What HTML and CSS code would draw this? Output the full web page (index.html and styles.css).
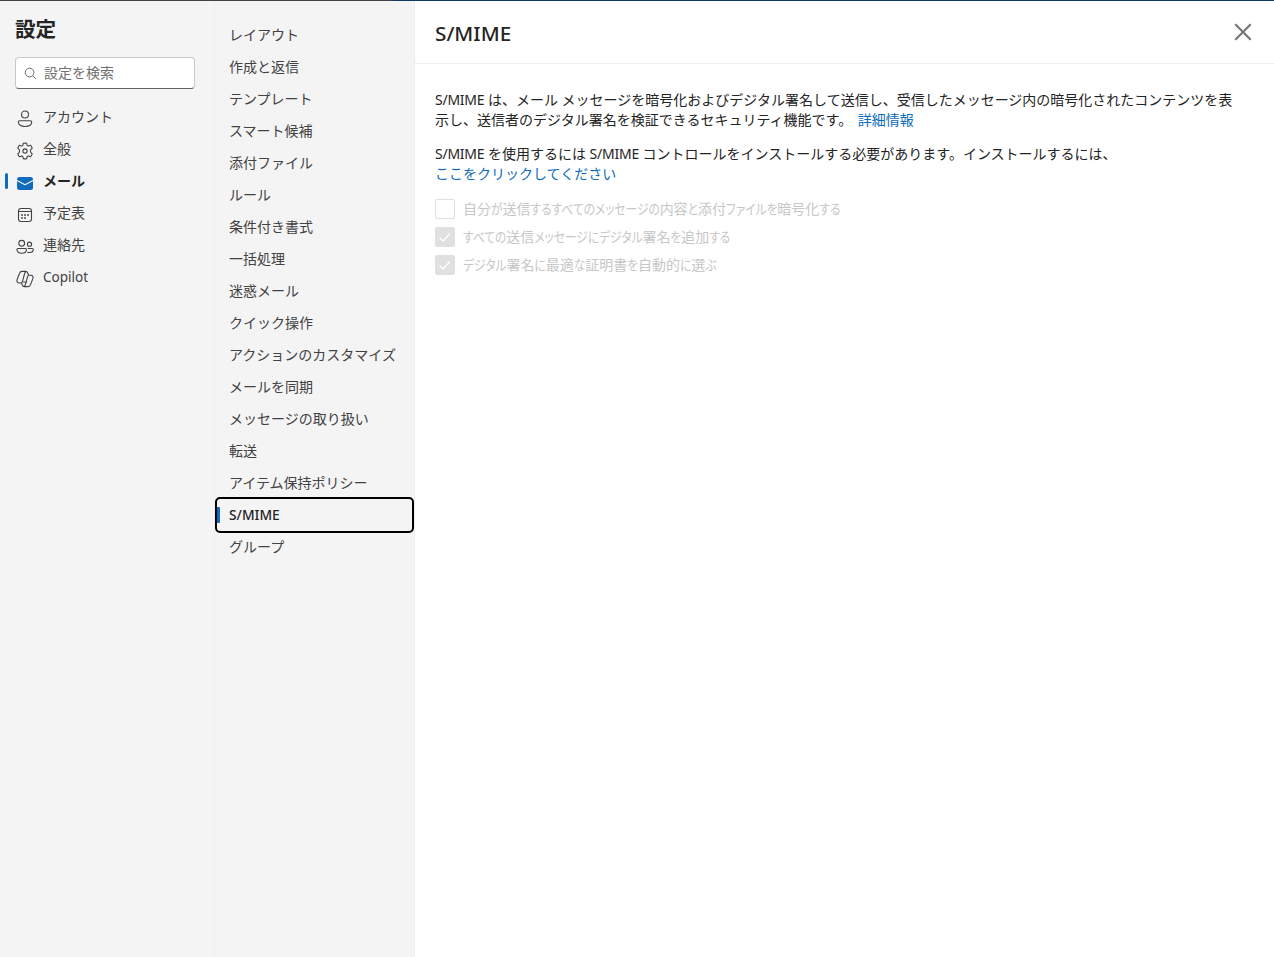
FILE: index.html
```html
<!DOCTYPE html>
<html lang="ja">
<head>
<meta charset="utf-8">
<title>設定</title>
<link rel="stylesheet" href="styles.css">
</head>
<body>
<div class="topbar"><div class="topbar-dim"></div></div>
<div class="settings">
  <aside class="categories">
    <h1 class="title">設定</h1>
    <div class="search">
      <svg class="search-icon" width="14" height="14" viewBox="0 0 14 14" fill="none" stroke="#616161"><circle cx="6" cy="6" r="4.7"/><path d="M9.4 9.4l3.4 3.4"/></svg>
      <span>設定を検索</span>
    </div>
    <nav class="category-list">
      <a class="category"><svg class="icon" viewBox="0 0 20 20"><circle cx="10" cy="5.500" r="3.500"/><path d="M4.800 11.700h10.400c.8 0 1.500.6 1.500 1.400 0 2.700-2.900 4.400-6.700 4.400s-6.700-1.700-6.700-4.400c0-.8.7-1.400 1.500-1.400z"/></svg><span>アカウント</span></a>
      <a class="category"><svg class="icon" viewBox="0 0 20 20"><path d="M8.300 2.300Q10 1.900 11.700 2.300L12.100 4.200Q12.500 5.100 13.500 4.900L15.400 4.200Q16.700 5.500 17.200 7.200L15.800 8.600Q15 10 15.800 11.400L17.200 12.800Q16.700 14.500 15.400 15.800L13.500 15.100Q12.500 14.900 12.100 15.800L11.700 17.700Q10 18.100 8.300 17.700L7.900 15.800Q7.500 14.900 6.500 15.100L4.600 15.800Q3.300 14.500 2.800 12.800L4.200 11.400Q5 10 4.200 8.600L2.800 7.200Q3.300 5.500 4.600 4.200L6.500 4.900Q7.500 5.100 7.900 4.200Z"/><circle cx="10" cy="10" r="2.100"/></svg><span>全般</span></a>
      <a class="category category-active"><svg class="icon" viewBox="0 0 20 20"><rect class="mail" x="2" y="4" width="16" height="13" rx="2.500"/><path class="flap" d="M2 7.500l8 4.200 8-4.200"/></svg><span>メール</span></a>
      <a class="category"><svg class="icon" viewBox="0 0 20 20"><rect x="3.500" y="3.500" width="13" height="13" rx="2.500"/><path d="M3.500 6.500h13"/><g class="dots"><circle cx="7" cy="10" r=".95"/><circle cx="10" cy="10" r=".95"/><circle cx="13" cy="10" r=".95"/><circle cx="7" cy="13" r=".95"/><circle cx="10" cy="13" r=".95"/></g></svg><span>予定表</span></a>
      <a class="category"><svg class="icon" viewBox="0 0 20 20"><circle cx="6.700" cy="6.300" r="2.900"/><circle cx="14.500" cy="7.200" r="2.100"/><path d="M3 11.500h7.500c.6 0 1 .4 1 1 0 2.400-2 3.700-4.800 3.700s-4.800-1.300-4.800-3.700c0-.6.500-1 1.100-1zM13.200 11.500h4c.6 0 1.100.4 1.100 1 0 2-1.600 3-3.800 3-.7 0-1.300-.1-1.800-.3"/></svg><span>連絡先</span></a>
      <a class="category"><svg class="icon" viewBox="0 0 20 20"><path d="M13.500 6.200l-.7-2c-.4-1.100-1-1.800-2.100-1.800H6.900c-1.300 0-2 .8-2.400 2L2.200 10.200c-.8 2.300.2 3.800 2 3.800h1.300c1 0 1.700-.6 2-1.700L9.600 4.500c.3-1.100.8-1.900 1.900-1.900"/><path d="M6.500 13.900l.7 1.900c.4 1.200 1 1.800 2.100 1.800h3.800c1.300 0 2-.8 2.400-2l2.300-5.700c.8-2.300-.2-3.700-2-3.700h-1.300c-1 0-1.700.6-2 1.700l-2.100 7.700c-.3 1.200-.8 1.900-1.900 1.900M8.500 13h3"/></svg><span class="latin-item">Copilot</span></a>
    </nav>
  </aside>
  <nav class="sections">
    <a class="section">レイアウト</a>
    <a class="section">作成と返信</a>
    <a class="section">テンプレート</a>
    <a class="section">スマート候補</a>
    <a class="section">添付ファイル</a>
    <a class="section">ルール</a>
    <a class="section">条件付き書式</a>
    <a class="section">一括処理</a>
    <a class="section">迷惑メール</a>
    <a class="section">クイック操作</a>
    <a class="section">アクションのカスタマイズ</a>
    <a class="section">メールを同期</a>
    <a class="section">メッセージの取り扱い</a>
    <a class="section">転送</a>
    <a class="section">アイテム保持ポリシー</a>
    <a class="section section-active"><span>S/MIME</span></a>
    <a class="section">グループ</a>
  </nav>
  <main class="panel">
    <header class="panel-header">
      <h2 class="panel-title">S/MIME</h2>
      <svg class="close" width="18" height="18" viewBox="0 0 18 18" fill="none" stroke="#767676" stroke-width="2.200"><path d="M1.300 1.300l15.400 15.400M16.700 1.300L1.300 16.700"/></svg>
    </header>
    <div class="content">
      <p class="para"><span class="latin">S/MIME</span> は、メール メッセージを暗号化およびデジタル署名して送信し、受信したメッセージ内の暗号化されたコンテンツを表<br>示し、送信者のデジタル署名を検証できるセキュリティ機能です。 <a class="link more">詳細情報</a></p>
      <p class="para"><span class="latin">S/MIME</span> を使用するには <span class="latin">S/MIME</span> コントロールをインストールする必要があります。インストールするには、<br><a class="link">ここをクリックしてください</a></p>
      <div class="options">
        <div class="option"><span class="box"></span><span class="label">自分<span class="kana">が</span>送信<span class="kana">するすべてのメッセージの</span>内容<span class="kana">と</span>添付<span class="kana">ファイルを</span>暗号化<span class="kana">する</span></span></div>
        <div class="option"><span class="box box-on"><svg width="14" height="14" viewBox="0 0 14 14"><path d="M1.500 7.500l3.500 3.500 7-7.500"/></svg></span><span class="label"><span class="kana">すべての</span>送信<span class="kana">メッセージにデジタル</span>署名<span class="kana">を</span>追加<span class="kana">する</span></span></div>
        <div class="option"><span class="box box-on"><svg width="14" height="14" viewBox="0 0 14 14"><path d="M1.500 7.500l3.500 3.500 7-7.500"/></svg></span><span class="label"><span class="kana">デジタル</span>署名<span class="kana">に</span>最適<span class="kana">な</span>証明書<span class="kana">を</span>自動的<span class="kana">に</span>選<span class="kana">ぶ</span></span></div>
      </div>
    </div>
  </main>
</div>
</body>
</html>
```
FILE: styles.css
```css
* { box-sizing: border-box; }
body {
  margin: 0;
  height: 957px;
  overflow: hidden;
  display: flex;
  flex-direction: column;
  background: #fff;
  color: #242424;
  font: 14px/20px "Noto Sans", "Noto Sans CJK JP", sans-serif;
}
h1, h2, p { margin: 0; }
.topbar { height: 1px; flex: none; background: #0f3868; }
.topbar-dim { width: 393px; height: 1px; background: #454045; }
.settings { flex: 1; display: flex; min-height: 0; }
.categories { width: 214px; flex: none; background: #f4f4f4; padding: 13px 0 0; }
.title { font-size: 20.600px; line-height: 28px; font-weight: 700; padding-left: 15px; font-family: "Noto Sans CJK JP", sans-serif; }
.search {
  display: flex; align-items: center; gap: 7px;
  width: 180px; height: 32px; margin: 15px 0 13px 15px; padding-left: 8px;
  background: #fff; border: 1px solid #c8c8c8; border-bottom-color: #616161; border-radius: 4px;
  color: #707070;
}
.search-icon { flex: none; width: 13px; height: 13px; }
.category {
  display: flex; align-items: center; gap: 8px;
  height: 32px; padding-left: 15px; color: #424242;
}
.category span { padding-bottom: 2px; }
.category .latin-item { font-size: 13.500px; }
.icon { width: 20px; height: 20px; flex: none; margin-top: 2px; fill: none; stroke: #424242; stroke-width: 1.100; stroke-linejoin: round; stroke-linecap: round; }
.icon .dots { fill: #424242; stroke: none; }
.icon .mail { fill: #0f6cbd; stroke: none; }
.icon .flap { stroke: #f4f4f4; stroke-width: 1.200; }
.category-active { color: #242424; font-weight: 700; padding-left: 5px; gap: 8px; }
.category-active::before { content: ""; width: 3px; height: 16px; border-radius: 2px; background: #0f6cbd; margin: 0 -1px 2px 0; }
.sections { width: 201px; flex: none; padding: 18px 0 0 0; background: #f4f4f4; border-left: 1px solid #efefef; border-right: 1px solid #ededed; }
.section { display: flex; align-items: center; height: 32px; padding: 0 0 0 14px; color: #424242; white-space: nowrap; }
.section-active {
  height: 36px; margin: -2px 0; padding-left: 1px; gap: 9px;
  border: 2px solid #000; border-radius: 5px; color: #242424; font-weight: 500; font-size: 13.800px;
}
.section-active::before { content: ""; width: 3px; height: 16px; margin-left: -1px; background: #0f6cbd; border-radius: 0 1px 1px 0; }
.panel { flex: 1; min-width: 0; background: #fff; }
.panel-header { display: flex; align-items: center; justify-content: space-between; height: 63px; padding: 0 22px 0 20px; border-bottom: 1px solid #ededed; }
.panel-title { font-size: 20.700px; line-height: 28px; font-weight: 500; padding-top: 2px; }
.content { padding: 26px 20px 0; }
.para { white-space: nowrap; margin-bottom: 14px; }
.latin { letter-spacing: -0.250px; }
.link { color: #0f6cbd; }
.more { margin-left: 2px; }
.options { display: flex; flex-direction: column; gap: 8px; padding-top: 1px; }
.option { display: flex; align-items: center; gap: 8px; height: 20px; color: #c7c7c7; white-space: nowrap; }
.label { padding-bottom: 1px; }
.box { width: 20px; height: 20px; flex: none; display: flex; align-items: center; justify-content: center; border: 1px solid #e0e0e0; border-radius: 2px; }
.box-on { background: #e0e0e0; }
.box svg { fill: none; stroke: #fff; stroke-width: 1.300; }
/* condensed kana: smaller advance width, full height */
.kana { display: inline-block; font-size: 11.720px; font-feature-settings: "palt"; transform: scaleY(1.200); transform-origin: 0 14px; }
```
